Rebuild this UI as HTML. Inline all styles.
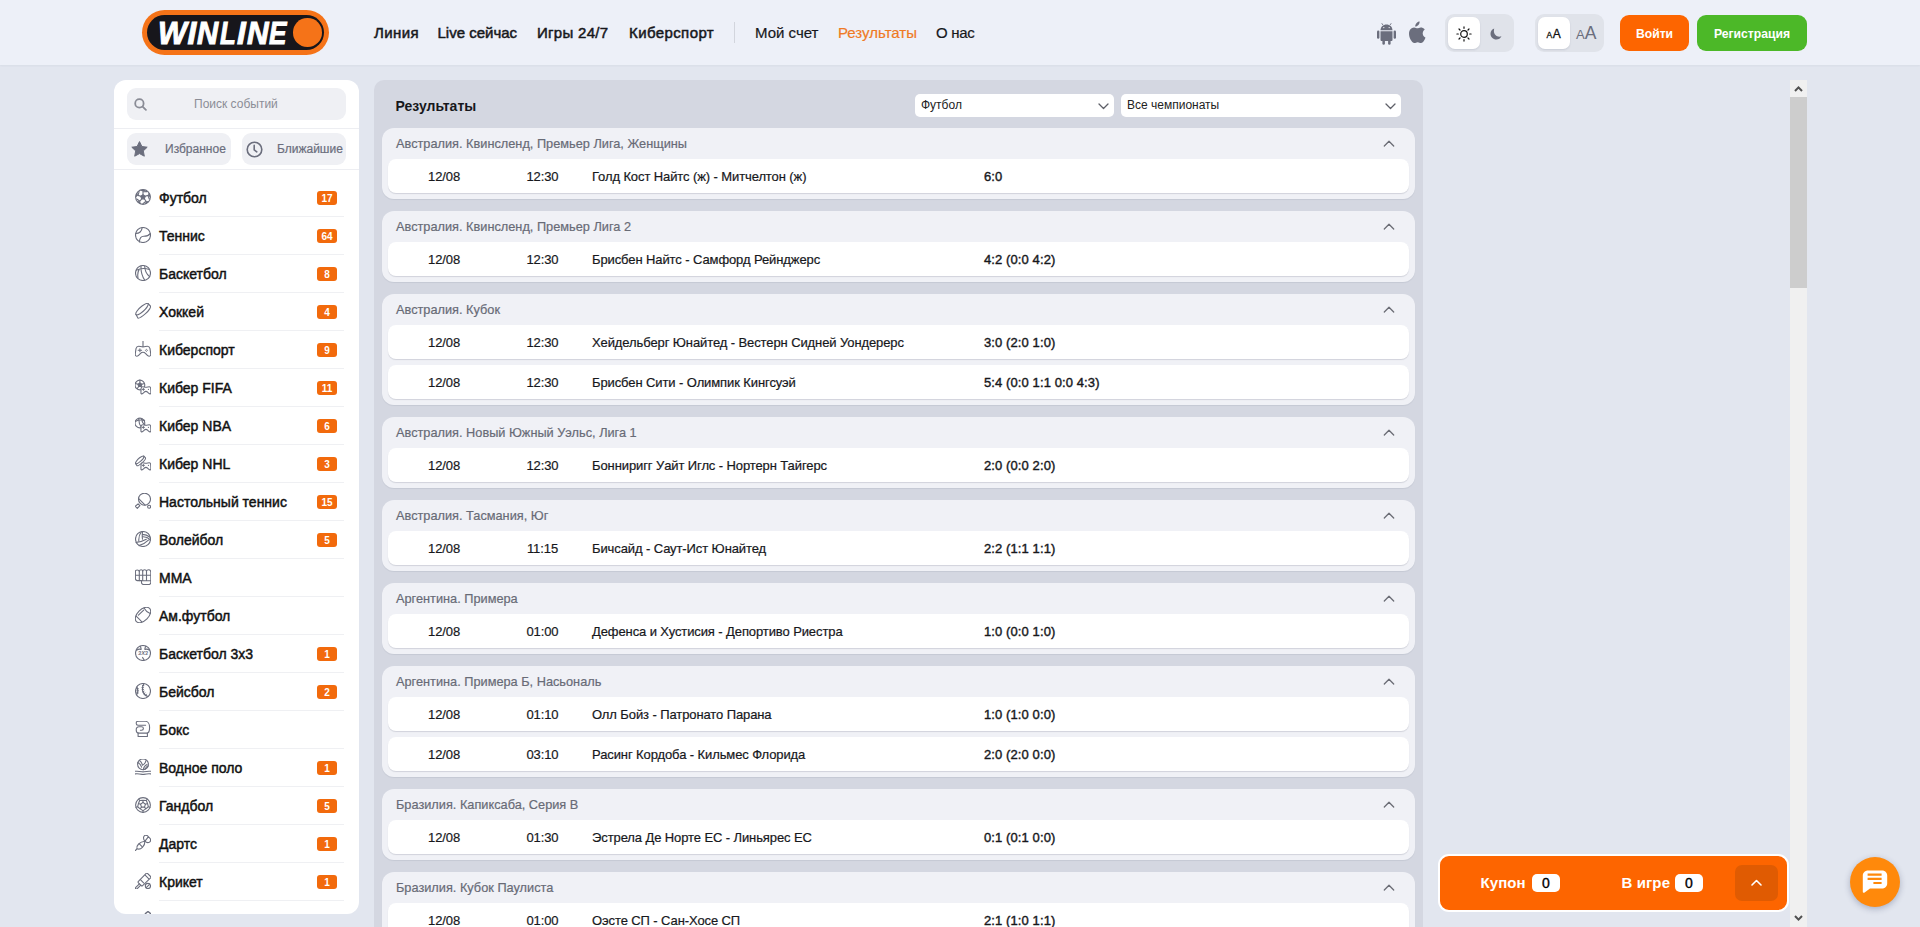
<!DOCTYPE html>
<html><head><meta charset="utf-8">
<style>
*{box-sizing:border-box;margin:0;padding:0}
html,body{width:1920px;height:927px;overflow:hidden}
body{background:#e2e6ef;font-family:"Liberation Sans",sans-serif;color:#17181c;position:relative}
.abs{position:absolute}
.lgo{top:14.5px;font-size:31.5px;line-height:36px;font-weight:700;font-style:italic;color:#fff;-webkit-text-stroke:1px #fff;transform-origin:left top}
svg{display:block}
#hdr{position:absolute;left:0;top:0;width:1920px;height:65px;background:#edf0f8;box-shadow:0 1px 2px rgba(40,50,80,.05)}
.nav{position:absolute;top:24px;font-size:15px;line-height:18px;white-space:nowrap;color:#17181c}
.nav.b{-webkit-text-stroke:0.5px #17181c}
.nav.r{-webkit-text-stroke:0.2px #17181c}
.nav.o{color:#ef7a24;-webkit-text-stroke:0.2px #ef7a24}
.btn{position:absolute;top:15px;height:36px;border-radius:9px;color:#fff;font-weight:700;font-size:12.2px;line-height:38px;text-align:center}
.tog{position:absolute;top:14px;width:69px;height:38px;border-radius:9px;background:#e0e3ea}
.tog .on{position:absolute;left:3px;top:3px;width:32px;height:32px;border-radius:7px;background:#fff;box-shadow:0 1px 2px rgba(30,40,70,.12)}
#side{position:absolute;left:114px;top:80px;width:245px;height:834px;background:#fff;border-radius:12px;overflow:hidden}
.search{position:absolute;left:13px;top:8px;width:219px;height:32px;border-radius:9px;background:#eff0f4}
.search .sic{position:absolute;left:7px;top:10px}
.search span{position:absolute;left:67px;top:9px;font-size:12px;line-height:15px;color:#8b8d96;white-space:nowrap}
.hl{position:absolute;left:0;width:245px;height:1px;background:#edeef2}
.fav{position:absolute;top:53px;width:104px;height:32px;border-radius:9px;background:#eff0f4}
.fav .fic{position:absolute;left:4px;top:8px}
.fav span{position:absolute;top:9px;font-size:12px;line-height:15px;color:#6b6e7d;white-space:nowrap;-webkit-text-stroke:0.2px #6b6e7d}
.sitem{position:absolute;left:0;width:245px;height:38px}
.sitem .ic{position:absolute;left:21px;top:10px;width:16px;height:16px}
.sitem .t{position:absolute;left:45px;top:10px;font-size:14px;line-height:18px;white-space:nowrap;-webkit-text-stroke:0.45px #111;color:#111}
.sitem .bd{position:absolute;left:203px;top:12px;width:20px;height:14px;border-radius:3px;background:#f26a0c;color:#fff;font-size:10px;font-weight:700;line-height:15px;text-align:center}
.sitem .ln{position:absolute;left:45px;right:15px;bottom:0;height:1px;background:#eff0f3}
#main{position:absolute;left:374px;top:80px;width:1049px;height:900px;background:#d4d7e1;border-radius:10px;overflow:hidden}
.title{position:absolute;left:21.5px;top:18px;font-size:14px;line-height:17px;font-weight:700;color:#17181c}
.dd{position:absolute;top:14px;height:23px;border-radius:5px;background:#fff}
.dd span{position:absolute;left:6px;top:4px;font-size:12px;line-height:15px;color:#222;white-space:nowrap}
.dd .ddc{position:absolute;right:5px;top:8.5px}
.blk{position:absolute;left:8px;width:1033px;background:#f0f1f6;border-radius:12px;box-shadow:0 1px 1px rgba(20,30,60,.07)}
.blk .lg{position:absolute;left:14px;top:8px;font-size:12.75px;line-height:15px;color:#686b76;white-space:nowrap;-webkit-text-stroke:.2px #686b76}
.blk .chev{position:absolute;right:20px;top:12px}
.row{position:absolute;left:6px;width:1021px;height:34px;background:#fff;border-radius:8px;box-shadow:0 1px 1px rgba(20,30,60,.14)}
.row span{position:absolute;top:9.5px;font-size:13px;line-height:16px;white-space:nowrap;color:#17181c;-webkit-text-stroke:0.2px #17181c;letter-spacing:-.1px}
.row .d{left:40px}
.row .tm{left:138px;width:33px;text-align:center}
.row .tn{left:204px}
.row .sc{left:596px;-webkit-text-stroke:0.4px #17181c;letter-spacing:.1px}
#sb{position:absolute;left:1790px;top:80px;width:17px;height:847px;background:#f0f0f0}
#coupon{position:absolute;left:1438px;top:854px;width:351px;height:58px;border-radius:11px;background:#fd6500;border:2px solid #fff}
#coupon .lbl{position:absolute;top:18px;font-size:15px;line-height:18px;font-weight:700;letter-spacing:.1px;color:#fff;white-space:nowrap}
#coupon .cnt{position:absolute;top:18px;width:28px;height:18px;border-radius:5px;background:#fff;color:#000;font-size:14px;line-height:18px;text-align:center;-webkit-text-stroke:.35px #000}
#chat{position:absolute;left:1850px;top:856.5px;width:50px;height:50px;border-radius:50%;background:#ff890b;box-shadow:0 2px 6px rgba(40,50,90,.30)}
</style></head><body>
<div id="hdr">
  <div class="abs" style="left:142px;top:9.5px;width:187px;height:45px;border-radius:23px;background:#f57318"></div>
  <div class="abs" style="left:147px;top:14.5px;width:177px;height:35px;border-radius:18px;background:#17161b"></div>
  <div class="abs lgo" style="left:157.5px;transform:scaleX(0.97)">W</div><div class="abs lgo" style="left:187.5px;transform:scaleX(1)">I</div><div class="abs lgo" style="left:196.5px;transform:scaleX(0.93)">N</div><div class="abs lgo" style="left:220px;transform:scaleX(0.82)">L</div><div class="abs lgo" style="left:237px;transform:scaleX(1)">I</div><div class="abs lgo" style="left:247px;transform:scaleX(0.95)">N</div><div class="abs lgo" style="left:269.2px;transform:scaleX(0.83)">E</div>
  <div class="abs" style="left:293px;top:18px;width:28.5px;height:28.5px;border-radius:50%;background:#f57318"></div>

  <div class="nav b" style="left:374px;letter-spacing:.4px">Линия</div>
  <div class="nav b" style="left:437.5px">Live сейчас</div>
  <div class="nav b" style="left:537px;letter-spacing:.3px">Игры 24/7</div>
  <div class="nav b" style="left:629px;letter-spacing:.4px">Киберспорт</div>
  <div class="abs" style="left:734px;top:22px;width:1px;height:21px;background:#d2d5dd"></div>
  <div class="nav r" style="left:755px">Мой счет</div>
  <div class="nav o" style="left:838px">Результаты</div>
  <div class="nav r" style="left:936px;letter-spacing:-.3px">О нас</div>

  <!-- android -->
  <svg class="abs" style="left:1376.5px;top:21.5px" width="19" height="23" viewBox="0 0 19 23">
    <path d="M5 1.6l.9 1.3M14 1.6l-.9 1.3" stroke="#6b6e7d" stroke-width=".9" stroke-linecap="round"/>
    <path d="M3.5 8.2C3.7 4.8 6.2 2.6 9.5 2.6s5.8 2.2 6 5.6z" fill="#6b6e7d"/>
    <circle cx="6.8" cy="5.6" r=".7" fill="#eef0f6"/><circle cx="12.2" cy="5.6" r=".7" fill="#eef0f6"/>
    <path d="M3.5 9.2h12v8.6c0 .8-.5 1.2-1.2 1.2H4.7c-.7 0-1.2-.4-1.2-1.2z" fill="#6b6e7d"/>
    <rect x="0" y="8.6" width="2.4" height="8.2" rx="1.2" fill="#6b6e7d"/>
    <rect x="16.6" y="8.6" width="2.4" height="8.2" rx="1.2" fill="#6b6e7d"/>
    <rect x="5.4" y="16" width="2.5" height="6.8" rx="1.25" fill="#6b6e7d"/>
    <rect x="11.1" y="16" width="2.5" height="6.8" rx="1.25" fill="#6b6e7d"/>
  </svg>
  <!-- apple -->
  <svg class="abs" style="left:1406.5px;top:20.5px" width="19" height="23" viewBox="0 0 19 23">
    <path d="M12.6 0.6c.1 1.3-.4 2.6-1.2 3.5-.8.9-2 1.6-3.2 1.5-.1-1.3.5-2.6 1.2-3.4.8-.9 2.2-1.6 3.2-1.6z" fill="#6b6e7d"/>
    <path d="M15.7 12.2c0-2.5 2-3.7 2.1-3.8-1.2-1.7-3-1.9-3.6-2-1.5-.2-3 .9-3.8.9-.8 0-2-.9-3.3-.9C5.4 6.5 3.8 7.5 2.9 9c-1.8 3.2-.5 7.9 1.3 10.5.9 1.3 1.9 2.7 3.2 2.6 1.3 0 1.8-.8 3.3-.8s2 .8 3.3.8c1.4 0 2.3-1.3 3.1-2.6 1-1.5 1.4-2.9 1.4-3-.1 0-2.8-1.1-2.8-4.3z" fill="#6b6e7d"/>
  </svg>
  <!-- theme toggle -->
  <div class="tog" style="left:1445px"><div class="on"></div>
    <svg class="abs" style="left:11px;top:11.5px" width="16" height="16" viewBox="0 0 16 16" fill="none" stroke="#111" stroke-width="1.2" stroke-linecap="round">
      <circle cx="8" cy="8" r="3.3"/><path d="M8 .9v1.4M8 13.7v1.4M.9 8h1.4M13.7 8h1.4M3 3l1 1M12 12l1 1M3 13l1-1M12 4l1-1"/>
    </svg>
    <svg class="abs" style="left:44px;top:12.5px" width="14" height="14" viewBox="0 0 14 14">
      <path d="M5.2 1.4C3 2.2 1.5 4.3 1.5 6.8c0 3.2 2.6 5.8 5.8 5.8 2.3 0 4.3-1.3 5.2-3.3-.7.3-1.4.4-2.2.4-3 0-5.4-2.4-5.4-5.4 0-1 .1-2 .3-2.9z" fill="#6b6e7d"/>
    </svg>
  </div>
  <!-- font toggle -->
  <div class="tog" style="left:1535px"><div class="on"></div>
    <div class="abs" style="left:11.5px;top:15px;font-size:8.5px;line-height:10px;color:#111;-webkit-text-stroke:.3px #111;letter-spacing:.6px;white-space:nowrap">A<span style="font-size:12px">A</span></div>
    <div class="abs" style="left:41px;top:11px;font-size:13px;line-height:16px;color:#6b6e7d;white-space:nowrap">A<span style="font-size:17.5px">A</span></div>
  </div>
  <div class="btn" style="left:1620px;width:69px;background:#fd6500">Войти</div>
  <div class="btn" style="left:1697px;width:110px;background:#4cb828">Регистрация</div>
</div>

<div id="side">
<div class="search"><svg class="sic" width="13" height="13" viewBox="0 0 13 13" fill="none" stroke="#8a8c96" stroke-width="1.8" stroke-linecap="round"><circle cx="5.4" cy="5.4" r="4.2"/><path d="M8.6 8.6l3.3 3.3"/></svg><span>Поиск событий</span></div>
<div class="hl" style="top:48px"></div>
<div class="fav" style="left:13px"><svg class="fic" width="17" height="16" viewBox="0 0 17 16"><path d="M8.5 .6l2.4 4.9 5.3.7-3.9 3.7 1 5.3-4.8-2.6-4.8 2.6 1-5.3L.8 6.2l5.3-.7z" fill="#6b6e7d" stroke="#6b6e7d" stroke-width="1" stroke-linejoin="round"/></svg><span style="left:38px">Избранное</span></div>
<div class="fav" style="left:128px"><svg class="fic" width="17" height="17" viewBox="0 0 17 17" fill="none" stroke="#6b6e7d" stroke-width="1.6" stroke-linecap="round"><circle cx="8.5" cy="8.5" r="7.3"/><path d="M8.2 4.4v4.4l2.6 2"/></svg><span style="left:35px">Ближайшие</span></div>
<div class="hl" style="top:89px"></div>
<div class="sitem" style="top:99px"><div class="ic"><svg width="16" height="16" viewBox="0 0 16 16" fill="none" stroke="#6b6e7d" stroke-width="1.1" stroke-linecap="round" stroke-linejoin="round" ><circle cx="8" cy="8" r="7.4"/><polygon points="8.00,5.70 10.19,7.29 9.35,9.86 6.65,9.86 5.81,7.29" fill="#6b6e7d"/><path d="M5.23 1.14 A7.4 7.4 0 0 1 10.77 1.14 L8.00 2.80zM13.67 3.24 A7.4 7.4 0 0 1 15.38 8.52 L12.95 6.39zM14.28 11.92 A7.4 7.4 0 0 1 9.79 15.18 L11.06 12.21zM6.21 15.18 A7.4 7.4 0 0 1 1.72 11.92 L4.94 12.21zM0.62 8.52 A7.4 7.4 0 0 1 2.33 3.24 L3.05 6.39z" fill="#6b6e7d" stroke="none"/><path d="M8.00 5.70L8.00 2.80M8.00 2.80L11.88 2.66M10.19 7.29L12.95 6.39M12.95 6.39L14.28 10.04M9.35 9.86L11.06 12.21M11.06 12.21L8.00 14.60M6.65 9.86L4.94 12.21M4.94 12.21L1.72 10.04M5.81 7.29L3.05 6.39M3.05 6.39L4.12 2.66"/></svg></div><div class="t">Футбол</div><div class="bd">17</div><div class="ln"></div></div>
<div class="sitem" style="top:137px"><div class="ic"><svg width="16" height="16" viewBox="0 0 16 16" fill="none" stroke="#6b6e7d" stroke-width="1.1" stroke-linecap="round" stroke-linejoin="round" ><circle cx="8" cy="8" r="7.5"/><path d="M7.2 .6C6.8 3.4 4.8 6.4 .8 6.4M15.2 6.6C13.8 8.6 11.4 9.3 8.8 9.3C6.2 9.3 4.6 11 4.4 15"/></svg></div><div class="t">Теннис</div><div class="bd">64</div><div class="ln"></div></div>
<div class="sitem" style="top:175px"><div class="ic"><svg width="16" height="16" viewBox="0 0 16 16" fill="none" stroke="#6b6e7d" stroke-width="1.1" stroke-linecap="round" stroke-linejoin="round" ><circle cx="8" cy="8" r="7.5"/><path d="M1.2 5.2Q7.7 2 14.4 4.6M6 .8C5.8 6 7.4 12 9.8 15.3M9.7 1.2C9.8 5 11.4 9 14.6 11.6M4.2 4.4C2.8 6.8 2.4 9.6 3 12.8"/></svg></div><div class="t">Баскетбол</div><div class="bd">8</div><div class="ln"></div></div>
<div class="sitem" style="top:213px"><div class="ic"><svg width="16" height="16" viewBox="0 0 16 16" fill="none" stroke="#6b6e7d" stroke-width="1.1" stroke-linecap="round" stroke-linejoin="round" ><path d="M1 11.6C-.2 10.4 3 6 7 3C10 .8 12.4 0 13.1 .6L15.4 3C16.1 3.9 14.5 7.2 10.5 10.6C7 13.6 3.8 15.6 2.9 15z"/><path d="M1 11.6C2 12.6 5.5 10.6 8.5 8C11.5 5.5 13.7 2 13.1 .6"/></svg></div><div class="t">Хоккей</div><div class="bd">4</div><div class="ln"></div></div>
<div class="sitem" style="top:251px"><div class="ic"><svg width="16" height="16" viewBox="0 0 16 16" fill="none" stroke="#6b6e7d" stroke-width="1.1" stroke-linecap="round" stroke-linejoin="round" ><path d="M8 0v5.4"/><path d="M3.6 5.2C5 5.2 6.2 5.9 8 5.9S11 5.2 12.4 5.2C13.6 5.2 14.6 6 15 7.6L15.7 12.6C16 14.2 15.2 15.3 14 15.3C12.8 15.3 12 14.3 10.6 12.6C9.8 11.7 9 11.3 8 11.3S6.2 11.7 5.4 12.6C4 14.3 3.2 15.3 2 15.3C.8 15.3 0 14.2 .3 12.6L1 7.6C1.4 6 2.4 5.2 3.6 5.2z"/><path d="M3.2 9.3h3.4M4.9 7.9v2.8M11.4 8.3h.01M12.4 9.3h.01M11.4 10.3h.01M10.4 9.3h.01"/></svg></div><div class="t">Киберспорт</div><div class="bd">9</div><div class="ln"></div></div>
<div class="sitem" style="top:289px"><div class="ic"><svg width="16" height="16" viewBox="0 0 16 16" fill="none" stroke="#6b6e7d" stroke-width="1.1" stroke-linecap="round" stroke-linejoin="round" ><circle cx="4.9" cy="6" r="4.9"/><path d="M4.9 3.9l1.9 1.4-.7 2.2H3.7L3 5.3z" fill="#6b6e7d"/><path d="M4.9 1.1v2.8M6.8 5.3l2.6-.8M3 5.3L.4 4.5M6.1 7.5l1.4 2M3.7 7.5l-1.4 2"/><path d="M7.6 7.8C8.6 7.8 9.6 8.3 10.9 8.3S13.2 7.8 14.2 7.8C15 7.8 15.5 8.4 15.7 9.4L15.9 13.4C16 14.4 15.4 14.9 14.8 14.9C14.2 14.9 13.6 14.2 12.6 13.2C12 12.6 11.5 12.4 10.9 12.4S9.8 12.6 9.2 13.2C8.2 14.2 7.6 14.9 7 14.9C6.4 14.9 5.8 14.4 5.9 13.4L6.1 9.4C6.3 8.4 6.8 7.8 7.6 7.8z" fill="#fff"/><path d="M7.6 10.4h1.6M8.4 9.6v1.6M13.4 10.4h.01"/></svg></div><div class="t">Кибер FIFA</div><div class="bd">11</div><div class="ln"></div></div>
<div class="sitem" style="top:327px"><div class="ic"><svg width="16" height="16" viewBox="0 0 16 16" fill="none" stroke="#6b6e7d" stroke-width="1.1" stroke-linecap="round" stroke-linejoin="round" ><circle cx="4.9" cy="6" r="4.9"/><path d="M.2 4.4Q4.9 2.2 9.6 3.4M3.8 1.2C3.6 4.6 4.8 8.4 6.6 10.6M6.8 1.6C6.8 4.2 8 6.6 9.8 7.8"/><path d="M7.6 7.8C8.6 7.8 9.6 8.3 10.9 8.3S13.2 7.8 14.2 7.8C15 7.8 15.5 8.4 15.7 9.4L15.9 13.4C16 14.4 15.4 14.9 14.8 14.9C14.2 14.9 13.6 14.2 12.6 13.2C12 12.6 11.5 12.4 10.9 12.4S9.8 12.6 9.2 13.2C8.2 14.2 7.6 14.9 7 14.9C6.4 14.9 5.8 14.4 5.9 13.4L6.1 9.4C6.3 8.4 6.8 7.8 7.6 7.8z" fill="#fff"/><path d="M7.6 10.4h1.6M8.4 9.6v1.6M13.4 10.4h.01"/></svg></div><div class="t">Кибер NBA</div><div class="bd">6</div><div class="ln"></div></div>
<div class="sitem" style="top:365px"><div class="ic"><svg width="16" height="16" viewBox="0 0 16 16" fill="none" stroke="#6b6e7d" stroke-width="1.1" stroke-linecap="round" stroke-linejoin="round" ><path d="M.7 8.6C-.1 7.8 2 4.9 4.6 2.8C6.6 1.3 8.2.7 8.8 1.1L10.3 2.7C10.8 3.3 9.7 5.5 7 7.8C4.7 9.8 2.6 11.1 2 10.7z"/><path d="M.7 8.6C1.4 9.3 3.7 7.9 5.7 6.2C7.7 4.5 9.2 2.2 8.8 1.1"/><path d="M7.6 7.8C8.6 7.8 9.6 8.3 10.9 8.3S13.2 7.8 14.2 7.8C15 7.8 15.5 8.4 15.7 9.4L15.9 13.4C16 14.4 15.4 14.9 14.8 14.9C14.2 14.9 13.6 14.2 12.6 13.2C12 12.6 11.5 12.4 10.9 12.4S9.8 12.6 9.2 13.2C8.2 14.2 7.6 14.9 7 14.9C6.4 14.9 5.8 14.4 5.9 13.4L6.1 9.4C6.3 8.4 6.8 7.8 7.6 7.8z" fill="#fff"/><path d="M7.6 10.4h1.6M8.4 9.6v1.6M13.4 10.4h.01"/></svg></div><div class="t">Кибер NHL</div><div class="bd">3</div><div class="ln"></div></div>
<div class="sitem" style="top:403px"><div class="ic"><svg width="16" height="16" viewBox="0 0 16 16" fill="none" stroke="#6b6e7d" stroke-width="1.1" stroke-linecap="round" stroke-linejoin="round" ><circle cx="9.5" cy="6.2" r="6"/><path d="M3.7 5.7L10.15 12.15"/><path d="M.3 13.3L3.1 10.8L4.9 12.7L2.3 15.4z"/><circle cx="14.1" cy="13.8" r="1.5"/></svg></div><div class="t">Настольный теннис</div><div class="bd">15</div><div class="ln"></div></div>
<div class="sitem" style="top:441px"><div class="ic"><svg width="16" height="16" viewBox="0 0 16 16" fill="none" stroke="#6b6e7d" stroke-width="1.1" stroke-linecap="round" stroke-linejoin="round" ><circle cx="8" cy="8" r="7.5"/><path d="M6.3 .8C4.4 3.5 3.6 6.5 3.8 9.6M7.6 .6C7.1 3.5 7.1 6 7.5 8.2M7.5 3.4C10 3.4 13 4.6 15.1 6.2M7.5 5.8C10.2 5.6 13.2 6.8 15.6 9M1.2 11.4C4.6 11.2 8.4 9.8 11.3 8.2M4 14.6C7.6 13.6 11 11.6 13.4 9.2"/></svg></div><div class="t">Волейбол</div><div class="bd">5</div><div class="ln"></div></div>
<div class="sitem" style="top:479px"><div class="ic"><svg width="16" height="16" viewBox="0 0 16 16" fill="none" stroke="#6b6e7d" stroke-width="1.1" stroke-linecap="round" stroke-linejoin="round" ><path d="M.4 2.6C.4 1.6 1.2 1 2.2 1C3.2 1 4.1 1.6 4.3 2.4C4.6 1.3 5.4.8 6.1.8C7 .8 7.6 1.4 7.7 2.2C8 1.2 8.8.7 9.6.7C10.6.7 11.3 1.3 11.5 2.2C11.8 1.2 12.6.8 13.6.8C15 .8 15.8 1.8 15.8 3V13.6C15.8 14.7 15 15.5 13.9 15.5H8.5C7.4 15.5 6.5 14.6 6.5 13.5V11.6H2.4C1.3 11.6.4 10.7.4 9.6z"/><path d="M.4 6.3H15.8M4.3 2.4V11.6M7.7 2.2V11.8M11.5 2.2V11.8M6.5 11.8H15.8"/></svg></div><div class="t">MMA</div><div class="ln"></div></div>
<div class="sitem" style="top:517px"><div class="ic"><svg width="16" height="16" viewBox="0 0 16 16" fill="none" stroke="#6b6e7d" stroke-width="1.1" stroke-linecap="round" stroke-linejoin="round" ><ellipse cx="8" cy="8" rx="9.3" ry="5.6" transform="rotate(-45 8 8)"/><path d="M9 .9C10.2 3 12.6 5.6 15.2 6.6M1 9.1C2.6 10.6 5.2 13 6.8 14.9M3.4 8.2L8.7 3.2"/></svg></div><div class="t">Ам.футбол</div><div class="ln"></div></div>
<div class="sitem" style="top:555px"><div class="ic"><svg width="16" height="16" viewBox="0 0 16 16" fill="none" stroke="#6b6e7d" stroke-width="1.1" stroke-linecap="round" stroke-linejoin="round" ><circle cx="8" cy="8" r="7.5"/><path d="M1.4 5.2Q4 3.6 6 4.4M10 4.4Q12 3.6 14.6 5.2M5.2 1.2Q6 2.6 6.2 4.2M10.8 1.2Q10 2.6 9.8 4.2M7.6 12.4Q8.2 13.6 9 14.6"/><text x="8" y="10.3" text-anchor="middle" font-family="Liberation Sans" font-weight="700" font-style="italic" font-size="5.6" fill="#6b6e7d" stroke="none">3X3</text></svg></div><div class="t">Баскетбол 3х3</div><div class="bd">1</div><div class="ln"></div></div>
<div class="sitem" style="top:593px"><div class="ic"><svg width="16" height="16" viewBox="0 0 16 16" fill="none" stroke="#6b6e7d" stroke-width="1.1" stroke-linecap="round" stroke-linejoin="round" ><circle cx="8" cy="8" r="7.5"/><path d="M8.8.8C7.4 3 7 5.6 7.6 8C8.4 10.6 10.2 12.6 12.8 13.6M2 4C3 6.4 3 9.4 1.8 11.6"/><path d="M7.4 2.6h1.4M7 4.6h1.4M7.1 6.6h1.4M7.8 8.8l1.2-.6M9 10.8l1-.8M10.6 12.2l.8-1M1.6 5.6h1.6M1.8 7.8h1.6M1.6 10h1.6" stroke-width="1"/></svg></div><div class="t">Бейсбол</div><div class="bd">2</div><div class="ln"></div></div>
<div class="sitem" style="top:631px"><div class="ic"><svg width="16" height="16" viewBox="0 0 16 16" fill="none" stroke="#6b6e7d" stroke-width="1.1" stroke-linecap="round" stroke-linejoin="round" ><path d="M2.8 .3H10.4C12.8.3 14.6 2.8 14.6 6.4C14.6 9.6 13.6 12.1 12 12.1H3.8C2.2 12.1 1.2 10.6 1.2 9C1.2 7.2 2.4 5.8 4 5.8H6.6C7.6 5.8 8.4 6.6 8.4 7.6C8.4 8.6 7.6 9.3 6.6 9.3H5.4"/><path d="M2.8.3C1.8.3 1.2 1.2 1.2 2.3C1.2 3.4 2 4.3 3 4.3H10.6M3.1 12.1V15.5H12.4V12.1"/></svg></div><div class="t">Бокс</div><div class="ln"></div></div>
<div class="sitem" style="top:669px"><div class="ic"><svg width="16" height="16" viewBox="0 0 16 16" fill="none" stroke="#6b6e7d" stroke-width="1.1" stroke-linecap="round" stroke-linejoin="round" ><circle cx="8" cy="5.3" r="5.4"/><path d="M4.4 1.4C6 2.6 7 4 7.4 6.2M2.8 3.6C4.6 4.6 6 6 6.6 8.2M7.4 6.2C9 5.6 10.4 4 11 1.6M8.4 10.6C8.6 8.4 9.8 6.4 12 5.4M10.2 10.2C10.6 8.6 11.8 7.4 13.4 6.8"/><path d="M.3 12.3C3 11.9 5.2 12.4 8 12.9C10.8 12.4 13 11.9 15.7 12.3M.3 14.9C3 14.5 5.2 15 8 15.5C10.8 15 13 14.5 15.7 14.9"/></svg></div><div class="t">Водное поло</div><div class="bd">1</div><div class="ln"></div></div>
<div class="sitem" style="top:707px"><div class="ic"><svg width="16" height="16" viewBox="0 0 16 16" fill="none" stroke="#6b6e7d" stroke-width="1.1" stroke-linecap="round" stroke-linejoin="round" ><circle cx="8" cy="8" r="7.4"/><polygon points="8.00,5.40 10.47,7.20 9.53,10.10 6.47,10.10 5.53,7.20"/><path d="M8.00 5.40L8.00 3.20M8.00 3.20L11.29 3.47L12.57 6.52M11.29 3.47L12.35 2.01M10.47 7.20L12.57 6.52M12.57 6.52L13.33 9.73L10.82 11.88M13.33 9.73L15.04 10.29M9.53 10.10L10.82 11.88M10.82 11.88L8.00 13.60L5.18 11.88M8.00 13.60L8.00 15.40M6.47 10.10L5.18 11.88M5.18 11.88L2.67 9.73L3.43 6.52M2.67 9.73L0.96 10.29M5.53 7.20L3.43 6.52M3.43 6.52L4.71 3.47L8.00 3.20M4.71 3.47L3.65 2.01"/></svg></div><div class="t">Гандбол</div><div class="bd">5</div><div class="ln"></div></div>
<div class="sitem" style="top:745px"><div class="ic"><svg width="16" height="16" viewBox="0 0 16 16" fill="none" stroke="#6b6e7d" stroke-width="1.1" stroke-linecap="round" stroke-linejoin="round" ><path d="M.3 15.6L2 13.8"/><path d="M2 13.8C1.6 12.2 2 10.6 3.6 9C5.2 7.4 7.4 6.4 9.9 6.2C10 8.8 9 10.8 7.4 12.4C5.8 14 3.8 14.4 2 13.8z"/><path d="M4.3 8.8L7.1 11.6"/><path d="M9.9 6.2C8.6 4.6 8.2 2.6 9 1.2C9.8 0 11.6-.1 12.6.9L15 3.3C16 4.4 15.8 6.3 14.6 7.1C13.2 8 11.2 7.5 9.9 6.2zM13.3 1.8L10 6.1"/></svg></div><div class="t">Дартс</div><div class="bd">1</div><div class="ln"></div></div>
<div class="sitem" style="top:783px"><div class="ic"><svg width="16" height="16" viewBox="0 0 16 16" fill="none" stroke="#6b6e7d" stroke-width="1.1" stroke-linecap="round" stroke-linejoin="round" ><path d="M12.4.3L15.6 3.5C16 3.9 16 4.4 15.6 4.8L7.6 12.6C7.2 13 6.6 13 6.2 12.6L3.4 9.8C3 9.4 3 8.8 3.4 8.4L11.2.4C11.6 0 12 0 12.4.3z"/><path d="M10.4 2.4L13.6 5.6M5.4 6.6L8.6 9.8"/><path d="M4.4 10.8L.8 14.4C.3 14.9.4 15.6.9 15.9C1.3 16.2 1.8 16.1 2.2 15.7L5.8 12.2"/><circle cx="12.9" cy="13" r="2.6"/><path d="M11.4 14.3L14.3 11.6"/></svg></div><div class="t">Крикет</div><div class="bd">1</div><div class="ln"></div></div>
<div class="sitem" style="top:821px"><div class="ic"><svg width="16" height="16" viewBox="0 0 16 16" fill="none" stroke="#6b6e7d" stroke-width="1.1" stroke-linecap="round" stroke-linejoin="round" ><path d="M10.4 2.6L13 .5L15.6 2.6" stroke-width="1.4"/></svg></div><div class="t">Снукер</div><div class="ln"></div></div>
</div>
<div id="main">
<div class="title">Результаты</div>
<div class="dd" style="left:541px;width:199px"><span>Футбол</span><svg class="ddc" width="11" height="7" viewBox="0 0 11 7" fill="none" stroke="#5e6068" stroke-width="1.3" stroke-linecap="round" stroke-linejoin="round"><path d="M1 1l4.5 4.5L10 1"/></svg></div>
<div class="dd" style="left:747px;width:280px"><span>Все чемпионаты</span><svg class="ddc" width="11" height="7" viewBox="0 0 11 7" fill="none" stroke="#5e6068" stroke-width="1.3" stroke-linecap="round" stroke-linejoin="round"><path d="M1 1l4.5 4.5L10 1"/></svg></div>
<div class="blk" style="top:48px;height:71px"><div class="lg">Австралия. Квинсленд, Премьер Лига, Женщины</div><svg class="chev" width="12" height="7" viewBox="0 0 12 7" fill="none" stroke="#6a6c74" stroke-width="1.3" stroke-linecap="round" stroke-linejoin="round"><path d="M1.3 6L6 1.3 10.7 6"/></svg><div class="row" style="top:31px"><span class="d">12/08</span><span class="tm">12:30</span><span class="tn">Голд Кост Найтс (ж) - Митчелтон (ж)</span><span class="sc">6:0</span></div></div>
<div class="blk" style="top:131px;height:71px"><div class="lg">Австралия. Квинсленд, Премьер Лига 2</div><svg class="chev" width="12" height="7" viewBox="0 0 12 7" fill="none" stroke="#6a6c74" stroke-width="1.3" stroke-linecap="round" stroke-linejoin="round"><path d="M1.3 6L6 1.3 10.7 6"/></svg><div class="row" style="top:31px"><span class="d">12/08</span><span class="tm">12:30</span><span class="tn">Брисбен Найтс - Самфорд Рейнджерс</span><span class="sc">4:2 (0:0 4:2)</span></div></div>
<div class="blk" style="top:214px;height:111px"><div class="lg">Австралия. Кубок</div><svg class="chev" width="12" height="7" viewBox="0 0 12 7" fill="none" stroke="#6a6c74" stroke-width="1.3" stroke-linecap="round" stroke-linejoin="round"><path d="M1.3 6L6 1.3 10.7 6"/></svg><div class="row" style="top:31px"><span class="d">12/08</span><span class="tm">12:30</span><span class="tn">Хейдельберг Юнайтед - Вестерн Сидней Уондерерс</span><span class="sc">3:0 (2:0 1:0)</span></div><div class="row" style="top:71px"><span class="d">12/08</span><span class="tm">12:30</span><span class="tn">Брисбен Сити - Олимпик Кингсуэй</span><span class="sc">5:4 (0:0 1:1 0:0 4:3)</span></div></div>
<div class="blk" style="top:337px;height:71px"><div class="lg">Австралия. Новый Южный Уэльс, Лига 1</div><svg class="chev" width="12" height="7" viewBox="0 0 12 7" fill="none" stroke="#6a6c74" stroke-width="1.3" stroke-linecap="round" stroke-linejoin="round"><path d="M1.3 6L6 1.3 10.7 6"/></svg><div class="row" style="top:31px"><span class="d">12/08</span><span class="tm">12:30</span><span class="tn">Бонниригг Уайт Иглс - Нортерн Тайгерс</span><span class="sc">2:0 (0:0 2:0)</span></div></div>
<div class="blk" style="top:420px;height:71px"><div class="lg">Австралия. Тасмания, Юг</div><svg class="chev" width="12" height="7" viewBox="0 0 12 7" fill="none" stroke="#6a6c74" stroke-width="1.3" stroke-linecap="round" stroke-linejoin="round"><path d="M1.3 6L6 1.3 10.7 6"/></svg><div class="row" style="top:31px"><span class="d">12/08</span><span class="tm">11:15</span><span class="tn">Бичсайд - Саут-Ист Юнайтед</span><span class="sc">2:2 (1:1 1:1)</span></div></div>
<div class="blk" style="top:503px;height:71px"><div class="lg">Аргентина. Примера</div><svg class="chev" width="12" height="7" viewBox="0 0 12 7" fill="none" stroke="#6a6c74" stroke-width="1.3" stroke-linecap="round" stroke-linejoin="round"><path d="M1.3 6L6 1.3 10.7 6"/></svg><div class="row" style="top:31px"><span class="d">12/08</span><span class="tm">01:00</span><span class="tn">Дефенса и Хустисия - Депортиво Риестра</span><span class="sc">1:0 (0:0 1:0)</span></div></div>
<div class="blk" style="top:586px;height:111px"><div class="lg">Аргентина. Примера Б, Насьональ</div><svg class="chev" width="12" height="7" viewBox="0 0 12 7" fill="none" stroke="#6a6c74" stroke-width="1.3" stroke-linecap="round" stroke-linejoin="round"><path d="M1.3 6L6 1.3 10.7 6"/></svg><div class="row" style="top:31px"><span class="d">12/08</span><span class="tm">01:10</span><span class="tn">Олл Бойз - Патронато Парана</span><span class="sc">1:0 (1:0 0:0)</span></div><div class="row" style="top:71px"><span class="d">12/08</span><span class="tm">03:10</span><span class="tn">Расинг Кордоба - Кильмес Флорида</span><span class="sc">2:0 (2:0 0:0)</span></div></div>
<div class="blk" style="top:709px;height:71px"><div class="lg">Бразилия. Капиксаба, Серия B</div><svg class="chev" width="12" height="7" viewBox="0 0 12 7" fill="none" stroke="#6a6c74" stroke-width="1.3" stroke-linecap="round" stroke-linejoin="round"><path d="M1.3 6L6 1.3 10.7 6"/></svg><div class="row" style="top:31px"><span class="d">12/08</span><span class="tm">01:30</span><span class="tn">Эстрела Де Норте ЕС - Линьярес ЕС</span><span class="sc">0:1 (0:1 0:0)</span></div></div>
<div class="blk" style="top:792px;height:71px"><div class="lg">Бразилия. Кубок Паулиста</div><svg class="chev" width="12" height="7" viewBox="0 0 12 7" fill="none" stroke="#6a6c74" stroke-width="1.3" stroke-linecap="round" stroke-linejoin="round"><path d="M1.3 6L6 1.3 10.7 6"/></svg><div class="row" style="top:31px"><span class="d">12/08</span><span class="tm">01:00</span><span class="tn">Оэсте СП - Сан-Хосе СП</span><span class="sc">2:1 (1:0 1:1)</span></div></div>
</div>

<div id="sb">
  <svg class="abs" style="left:4px;top:4.5px" width="9" height="7" viewBox="0 0 9 7"><path d="M1 6L4.5 2.4 8 6" fill="none" stroke="#505050" stroke-width="2"/></svg>
  <div class="abs" style="left:0;top:17px;width:17px;height:191px;background:#cdcdcd"></div>
  <svg class="abs" style="left:4px;top:835px" width="9" height="7" viewBox="0 0 9 7"><path d="M1 1L4.5 4.6 8 1" fill="none" stroke="#505050" stroke-width="2"/></svg>
</div>

<div id="coupon">
  <div class="lbl" style="left:40.5px">Купон</div>
  <div class="cnt" style="left:92px">0</div>
  <div class="lbl" style="left:181.5px">В игре</div>
  <div class="cnt" style="left:235px">0</div>
  <div class="abs" style="left:295px;top:9px;width:43px;height:36px;border-radius:7px;background:#e05b02"></div>
  <svg class="abs" style="left:310.5px;top:23px" width="11" height="7" viewBox="0 0 11 7"><path d="M1 6l4.5-4.5L10 6" fill="none" stroke="#fff" stroke-width="1.6" stroke-linecap="round" stroke-linejoin="round"/></svg>
</div>
<div id="chat">
  <svg class="abs" style="left:12px;top:13.5px" width="26" height="24" viewBox="0 0 26 24">
    <path d="M6 .6h14.2c2.8 0 5 2.2 5 5v7.8c0 2.8-2.2 5-5 5H8L2.6 22.6C1.8 23.2.8 22.7.8 21.7V5.6C.8 2.8 3.2.6 6 .6z" fill="#fff"/>
    <path d="M5.6 4.6h14M5.6 8.8h14M11.4 13h8.2" stroke="#ff890b" stroke-width="2.2"/>
  </svg>
</div>
</body></html>
